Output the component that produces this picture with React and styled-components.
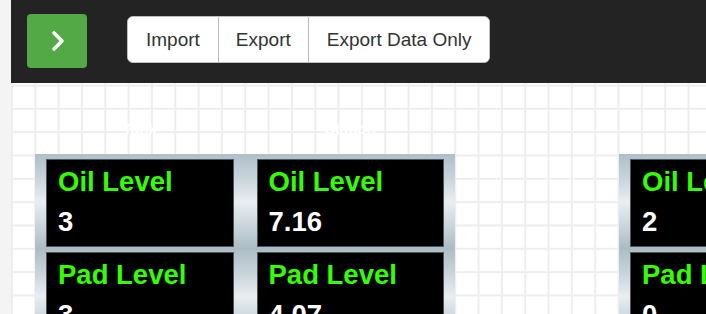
import styled, { createGlobalStyle } from "styled-components";

const Global = createGlobalStyle`
  html, body, #root {
    margin: 0;
    height: 100%;
  }
  body {
    background: #f4f4f4;
    font-family: "Liberation Sans", Arial, Helvetica, sans-serif;
    overflow: hidden;
  }
`;

const WIDGETS = [
  {
    cols: ["Tank", "Station"],
    rows: [
      [
        { label: "Oil Level", value: "3" },
        { label: "Oil Level", value: "7.16" },
      ],
      [
        { label: "Pad Level", value: "3" },
        { label: "Pad Level", value: "4.07" },
      ],
    ],
  },
  {
    cols: ["Tank", "Station"],
    rows: [
      [
        { label: "Oil Level", value: "2" },
        { label: "Oil Level", value: "5.40" },
      ],
      [
        { label: "Pad Level", value: "0" },
        { label: "Pad Level", value: "1.12" },
      ],
    ],
  },
];

const Page = styled.div`
  display: flex;
  height: 100%;
`;

const Strip = styled.div`
  width: 11px;
  flex-shrink: 0;
  background: #f4f4f4;
`;

const Main = styled.div`
  flex: 1;
  display: flex;
  flex-direction: column;
  min-width: 0;
`;

const Toolbar = styled.div`
  height: 83px;
  flex-shrink: 0;
  box-sizing: border-box;
  background: #232323;
  display: flex;
  align-items: flex-start;
  gap: 40px;
  padding: 14px 0 0 16px;
`;

const GoButton = styled.button`
  width: 60px;
  height: 54px;
  border: none;
  border-radius: 4px;
  background: #53a946;
  display: flex;
  align-items: center;
  justify-content: center;
  padding: 0 0 0 1px;
  cursor: pointer;
`;

const Group = styled.div`
  display: flex;
  margin-top: 2px;
  height: 47px;
  box-sizing: border-box;
  background: #fff;
  border: 1.5px solid #bdbdbd;
  border-radius: 6px;
  overflow: hidden;
`;

const GroupButton = styled.button`
  font-family: inherit;
  font-size: 19px;
  color: #333;
  background: #fff;
  border: none;
  border-left: ${(p) => (p.first ? "none" : "1.5px solid #bdbdbd")};
  padding: 0 ${(p) => p.pad}px;
  cursor: pointer;
`;

const Canvas = styled.div`
  flex: 1;
  display: flex;
  align-items: flex-start;
  gap: 164px;
  padding-left: 24px;
  overflow: hidden;
  background-color: #fff;
  background-image: linear-gradient(#eeeeee 1.5px, transparent 1.5px),
    linear-gradient(90deg, #eeeeee 1.5px, transparent 1.5px);
  background-size: 23.33px 23.33px;
  background-position: 0 1.5px;
`;

const Widget = styled.div`
  width: 420px;
  flex-shrink: 0;
  display: flex;
  flex-direction: column;
`;

const Heads = styled.div`
  height: 71px;
  flex-shrink: 0;
  box-sizing: border-box;
  display: grid;
  grid-template-columns: 1fr 1fr;
  gap: 23px;
  padding: 37px 11px 0;
`;

const Head = styled.div`
  color: #fff;
  font-weight: bold;
  font-size: 15px;
  text-align: center;
`;

const Row = styled.div`
  flex-shrink: 0;
  display: grid;
  grid-template-columns: 1fr 1fr;
  gap: 23px;
  padding: ${(p) => (p.first ? "5px 11px 2.5px" : "2.5px 11px 2.5px")};
  background: linear-gradient(
    180deg,
    #aebfc8 0%,
    #c8d4da 25%,
    #e9eef1 50%,
    #c6d2d8 78%,
    #a9bac3 100%
  );
`;

const Cell = styled.div`
  background: #000;
  border: 1px solid #4f5559;
  padding: 6px 11px 9px;
  min-width: 0;
`;

const Label = styled.div`
  color: #33ff00;
  font-weight: bold;
  font-size: 27.5px;
  line-height: 31px;
  white-space: nowrap;
`;

const Value = styled.div`
  color: #fff;
  font-weight: bold;
  font-size: 27.5px;
  line-height: 31px;
  margin-top: 9px;
`;

const Chevron = () => (
  <svg width="16" height="22" viewBox="0 0 16 22">
    <polyline
      points="4,3 12,11 4,19"
      fill="none"
      stroke="#fff"
      strokeWidth="3.6"
      strokeLinecap="round"
      strokeLinejoin="round"
    />
  </svg>
);

const App = () => {
  return (
    <Page>
      <Global />
      <Strip />
      <Main>
        <Toolbar>
          <GoButton>
            <Chevron />
          </GoButton>
          <Group>
            <GroupButton first pad={18}>Import</GroupButton>
            <GroupButton pad={17}>Export</GroupButton>
            <GroupButton pad={18}>Export Data Only</GroupButton>
          </Group>
        </Toolbar>
        <Canvas>
          {WIDGETS.map((w, wi) => (
            <Widget key={wi}>
              <Heads>
                {w.cols.map((c) => (
                  <Head key={c}>{c}</Head>
                ))}
              </Heads>
              {w.rows.map((r, ri) => (
                <Row key={ri} first={ri === 0}>
                  {r.map((cell, ci) => (
                    <Cell key={ci}>
                      <Label>{cell.label}</Label>
                      <Value>{cell.value}</Value>
                    </Cell>
                  ))}
                </Row>
              ))}
            </Widget>
          ))}
        </Canvas>
      </Main>
    </Page>
  );
};

export default App;
